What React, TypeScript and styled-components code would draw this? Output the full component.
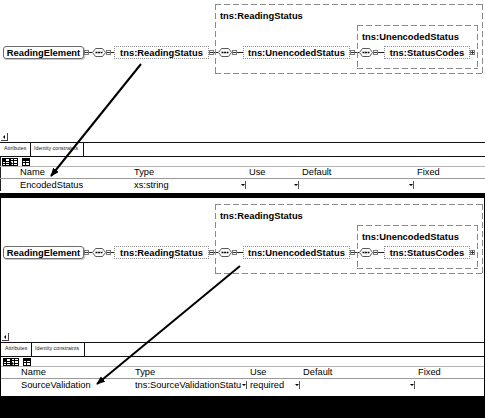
import React from "react";
import styled, { createGlobalStyle } from "styled-components";

const GlobalStyle = createGlobalStyle`
  html, body { margin: 0; padding: 0; background: #000; }
  body {
    width: 485px; height: 418px; overflow: hidden;
    font-family: "Liberation Sans", Arial, sans-serif; color: #000;
  }
  * { box-sizing: border-box; }
`;

const Screen = styled.div`
  width: 485px;
  height: 418px;
  background: #000;
  display: flex;
  flex-direction: column;
  gap: 5px;
`;

const Panel = styled.section<{ $framed?: boolean; $padBottom: number }>`
  position: relative;
  background: #fff;
  padding-bottom: ${(p) => p.$padBottom}px;
  border-left: ${(p) => (p.$framed ? "1px solid #000" : "0")};
  border-right: ${(p) => (p.$framed ? "1px solid #000" : "0")};
`;

/* ---------- diagram ---------- */

const Diagram = styled.div<{ $h: number; $padTop: number; $padLeft: number }>`
  height: ${(p) => p.$h}px;
  padding: ${(p) => p.$padTop}px 0 0 ${(p) => p.$padLeft}px;
  font-size: 9.4px;
  font-weight: bold;
`;

const DiagramRow = styled.div`
  display: flex;
  align-items: flex-end;
`;

const Track = styled.div<{ $drop: number }>`
  display: flex;
  align-items: center;
  height: 13px;
  margin-bottom: ${(p) => p.$drop}px;
`;

const ElementBox = styled.div<{ $w: number }>`
  width: ${(p) => p.$w}px;
  height: 13px;
  border: 1px solid #6e6e6e;
  border-radius: 3px;
  line-height: 11px;
  text-align: center;
  white-space: nowrap;
  background: #fff;
  box-shadow: 1px 1px 0 #c8c8c8;
`;

const TypeBox = styled.div<{ $w: number }>`
  width: ${(p) => p.$w}px;
  height: 13px;
  border: 1px dotted #8c8c8c;
  line-height: 11px;
  text-align: center;
  white-space: nowrap;
  background: #fff;
`;

const Wire = styled.span<{ $w: number }>`
  display: block;
  width: ${(p) => p.$w}px;
  height: 1px;
  background: #222;
`;

const Toggle = styled.span<{ $plus?: boolean }>`
  position: relative;
  display: flex;
  align-items: center;
  justify-content: center;
  width: 5px;
  height: 5px;
  border: 1px solid #7a7a7a;
  background: #fff;
  flex: none;
  &::before {
    content: "";
    display: block;
    width: 3px;
    height: 1px;
    background: #333;
  }
  &::after {
    content: "";
    display: ${(p) => (p.$plus ? "block" : "none")};
    position: absolute;
    left: 1px;
    top: 0;
    width: 1px;
    height: 3px;
    background: #333;
  }
`;

const DashedGroup = styled.div<{ $padRight: number; $padBottom: number }>`
  display: flex;
  flex-direction: column;
  padding: 6px ${(p) => p.$padRight + 1}px ${(p) => p.$padBottom + 1}px 1px;
  background:
    linear-gradient(90deg, #8a8a8a 6px, transparent 6px) left top / 9px 1px repeat-x,
    linear-gradient(90deg, #8a8a8a 6px, transparent 6px) left bottom / 9px 1px repeat-x,
    linear-gradient(180deg, #8a8a8a 6px, transparent 6px) left top / 1px 9px repeat-y,
    linear-gradient(180deg, #8a8a8a 6px, transparent 6px) right top / 1px 9px repeat-y;
`;

const GroupTitle = styled.div`
  line-height: 11px;
  padding-left: 4px;
  margin-bottom: 4px;
  white-space: nowrap;
`;

function Sequence() {
  return (
    <svg width="14" height="9" viewBox="0 0 14 9" style={{ flex: "none" }}>
      <path d="M3.5 0.5 H10.5 L13.5 4.5 L10.5 8.5 H3.5 L0.5 4.5 Z" fill="#fff" stroke="#5a5a5a" />
      <path d="M3.5 4.5 H10.5" stroke="#000" strokeWidth="1.3" strokeDasharray="2 0.6" />
    </svg>
  );
}

function SchemaDiagram() {
  return (
    <DiagramRow>
      <Track $drop={15}>
        <ElementBox $w={81}>ReadingElement</ElementBox>
        <Toggle />
        <Wire $w={3} />
        <Sequence />
        <Toggle />
        <Wire $w={3} />
        <TypeBox $w={95}>tns:ReadingStatus</TypeBox>
        <Toggle />
        <Wire $w={1} />
      </Track>
      <DashedGroup $padRight={4} $padBottom={4}>
        <GroupTitle>tns:ReadingStatus</GroupTitle>
        <DiagramRow>
          <Track $drop={10}>
            <Wire $w={2} />
            <Sequence />
            <Toggle />
            <Wire $w={6} />
            <TypeBox $w={107}>tns:UnencodedStatus</TypeBox>
            <Toggle />
            <Wire $w={2} />
          </Track>
          <DashedGroup $padRight={2} $padBottom={9}>
            <GroupTitle>tns:UnencodedStatus</GroupTitle>
            <DiagramRow>
              <Track $drop={0}>
                <Wire $w={1} />
                <Sequence />
                <Toggle />
                <Wire $w={6} />
                <TypeBox $w={86}>tns:StatusCodes</TypeBox>
                <Toggle $plus />
              </Track>
            </DiagramRow>
          </DashedGroup>
        </DiagramRow>
      </DashedGroup>
    </DiagramRow>
  );
}

/* ---------- lower pane ---------- */

const ScrollStrip = styled.div`
  height: 10px;
  display: flex;
  align-items: flex-start;
  padding: 1px 0 0 1px;
`;

const ScrollButton = styled.span`
  display: flex;
  align-items: center;
  justify-content: center;
  width: 7px;
  height: 8px;
  border-right: 1px solid #444;
  border-bottom: 1px solid #444;
  &::before {
    content: "";
    border-style: solid;
    border-width: 2px 2px 2px 0;
    border-color: transparent #000 transparent transparent;
  }
`;

const TabStrip = styled.div`
  display: flex;
  height: 15px;
  border-top: 1px solid #111;
  border-bottom: 1px solid #111;
`;

const Tab = styled.div<{ $w: number; $active?: boolean }>`
  width: ${(p) => p.$w}px;
  font-size: 5.3px;
  line-height: 10px;
  padding-left: ${(p) => (p.$active ? 4 : 3)}px;
  border-right: 1px solid #111;
  white-space: nowrap;
  overflow: hidden;
  color: #222;
`;

const Table = styled.div<{ $edge?: boolean }>`
  box-shadow: ${(p) => (p.$edge ? "inset 1px 0 0 #222" : "none")};
`;

const Toolbar = styled.div`
  display: flex;
  align-items: center;
  height: 10px;
  padding-left: 2px;
  border-bottom: 1px solid #b5b5b5;
`;

const ToolIcon = styled.svg<{ $gap?: number }>`
  display: block;
  flex: none;
  margin-left: ${(p) => p.$gap ?? 0}px;
`;

const GridRow = styled.div<{ $header?: boolean }>`
  display: grid;
  grid-template-columns: 17px 114px 115px 53px 115px 1fr;
  height: 12px;
  border-bottom: ${(p) => (p.$header ? "1px solid #9a9a9a" : "0")};
  font-size: 9.3px;
  line-height: 11px;
`;

const Cell = styled.div`
  display: flex;
  align-items: center;
  padding-left: 3px;
  overflow: hidden;
  white-space: nowrap;
`;

const CellText = styled.span`
  flex: 1;
  white-space: nowrap;
`;

const Drop = styled.span`
  flex: none;
  width: 6px;
  height: 8px;
  border-right: 1px solid #555;
  display: flex;
  align-items: center;
  justify-content: center;
  &::before {
    content: "";
    border-style: solid;
    border-width: 2px 2px 0;
    border-color: #000 transparent transparent;
  }
`;

function Tools() {
  return (
    <Toolbar>
      <ToolIcon width="8" height="8" viewBox="0 0 8 8">
        <rect x="0.5" y="0.5" width="7" height="7" fill="#fff" stroke="#000" />
        <path d="M0.5 3.5H7.5M0.5 5.5H7.5M3.5 0.5V7.5" stroke="#000" />
        <rect x="1" y="1" width="2" height="2" fill="#000" />
      </ToolIcon>
      <ToolIcon width="8" height="8" viewBox="0 0 8 8">
        <rect x="0.5" y="0.5" width="7" height="7" fill="#fff" stroke="#000" />
        <path d="M0.5 2.5H7.5M3.5 0.5V7.5M4 5.5H7.5" stroke="#000" />
        <path d="M1 4L3 5.5L1 7Z" fill="#000" />
      </ToolIcon>
      <ToolIcon width="8" height="8" viewBox="0 0 8 8" $gap={4}>
        <rect x="0.5" y="0.5" width="7" height="7" fill="#fff" stroke="#000" />
        <path d="M0.5 2.5H7.5M0.5 4.5H7.5M3.5 0.5V7.5" stroke="#000" />
        <rect x="0.5" y="0.5" width="7" height="1.5" fill="#000" />
      </ToolIcon>
    </Toolbar>
  );
}

type Attr = { name: string; type: string; use: string };

function AttributeTable({ attr, edge }: { attr: Attr; edge?: boolean }) {
  return (
    <Table $edge={edge}>
      <Tools />
      <GridRow $header>
        <Cell />
        <Cell>Name</Cell>
        <Cell>Type</Cell>
        <Cell>Use</Cell>
        <Cell>Default</Cell>
        <Cell>Fixed</Cell>
      </GridRow>
      <GridRow>
        <Cell />
        <Cell>{attr.name}</Cell>
        <Cell>
          <CellText>{attr.type}</CellText>
          <Drop />
        </Cell>
        <Cell>
          <CellText>{attr.use}</CellText>
          <Drop />
        </Cell>
        <Cell>
          <CellText />
          <Drop />
        </Cell>
        <Cell />
      </GridRow>
    </Table>
  );
}

/* ---------- annotation arrow ---------- */

const Overlay = styled.svg`
  position: absolute;
  left: 0;
  top: 0;
  width: 100%;
  height: 100%;
  pointer-events: none;
  overflow: visible;
`;

function Pointer({ id, x1, y1, x2, y2 }: { id: string; x1: number; y1: number; x2: number; y2: number }) {
  return (
    <Overlay>
      <defs>
        <marker
          id={id}
          viewBox="0 0 10 8"
          refX="9"
          refY="4"
          markerWidth="9"
          markerHeight="7"
          markerUnits="userSpaceOnUse"
          orient="auto"
        >
          <path d="M0 0L10 4L0 8Z" fill="#000" />
        </marker>
      </defs>
      <line x1={x1} y1={y1} x2={x2} y2={y2} stroke="#000" strokeWidth="2" markerEnd={`url(#${id})`} />
    </Overlay>
  );
}

function EditorPane({
  framed,
  attr,
  arrow,
  id,
}: {
  framed?: boolean;
  attr: Attr;
  arrow: [number, number, number, number];
  id: string;
}) {
  return (
    <Panel $framed={framed} $padBottom={framed ? 5 : 2}>
      <Diagram $h={framed ? 134 : 132} $padTop={framed ? 6 : 4} $padLeft={framed ? 2 : 3}>
        <SchemaDiagram />
      </Diagram>
      <ScrollStrip>
        <ScrollButton />
      </ScrollStrip>
      <TabStrip>
        <Tab $w={31} $active>Attributes</Tab>
        <Tab $w={53}>Identity constraints</Tab>
      </TabStrip>
      <AttributeTable attr={attr} edge={!framed} />
      <Pointer id={id} x1={arrow[0]} y1={arrow[1]} x2={arrow[2]} y2={arrow[3]} />
    </Panel>
  );
}

export default function App() {
  return (
    <>
      <GlobalStyle />
      <Screen>
        <EditorPane
          id="arrowTop"
          attr={{ name: "EncodedStatus", type: "xs:string", use: "" }}
          arrow={[141, 64, 51, 176]}
        />
        <EditorPane
          framed
          id="arrowBottom"
          attr={{ name: "SourceValidation", type: "tns:SourceValidationStatu", use: "required" }}
          arrow={[239, 68, 96, 186]}
        />
      </Screen>
    </>
  );
}
